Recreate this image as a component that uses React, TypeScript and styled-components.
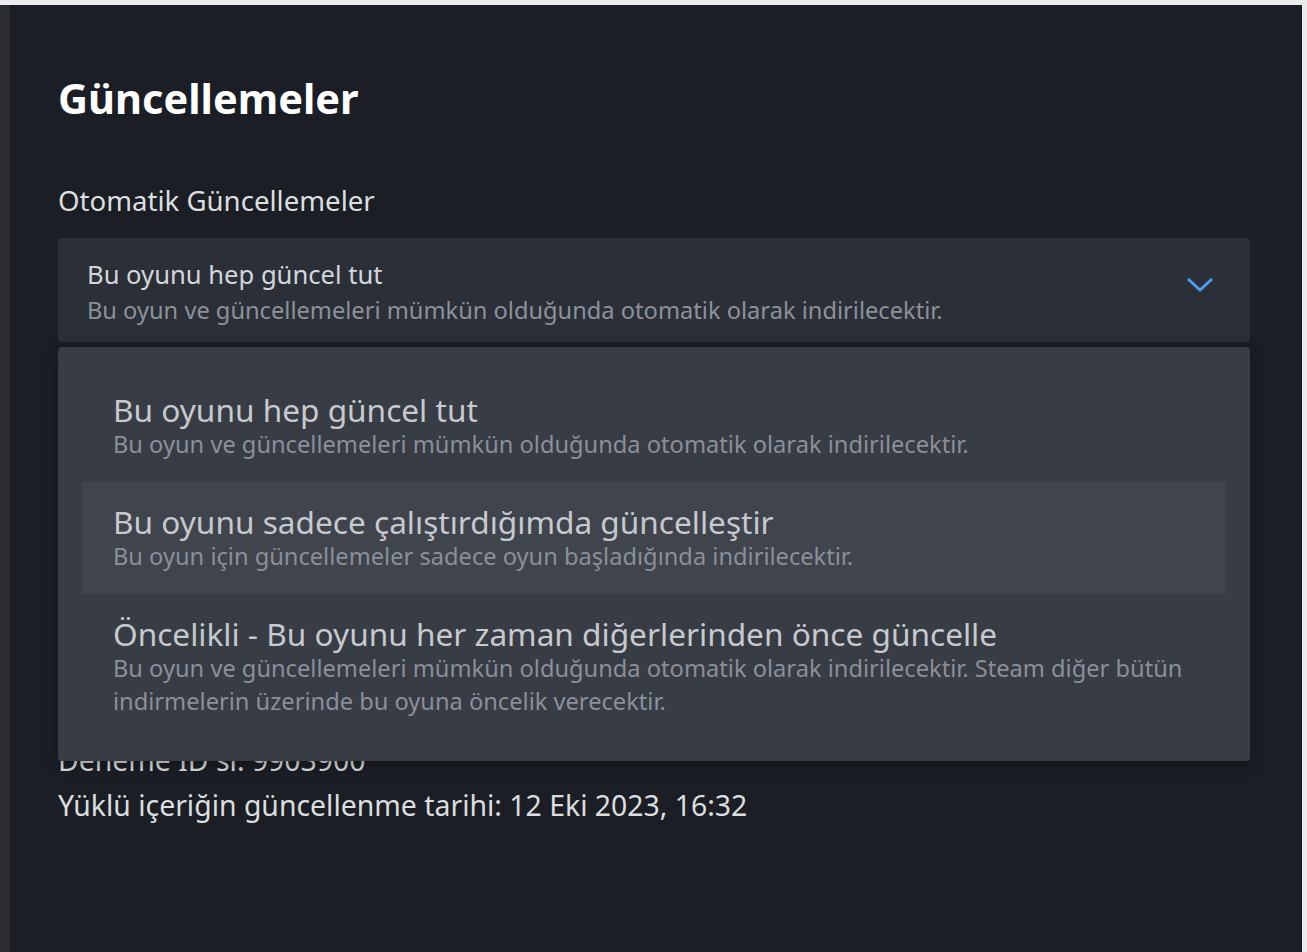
import React from "react";
import styled, { createGlobalStyle } from "styled-components";

const Global = createGlobalStyle`
  html, body { margin: 0; padding: 0; background: #ebebeb; }
  body { font-family: "Noto Sans", "Open Sans", sans-serif; }
  * { box-sizing: border-box; }
`;

const Frame = styled.div`
  display: flex;
  height: 952px;
  padding: 5px 5px 0 0;
  background: #ebebeb;
`;

const SideStrip = styled.div`
  width: 10px;
  flex: none;
  background: #2a2c31;
`;

const Main = styled.main`
  flex: 1;
  background: #1b1e25;
  padding: 67px 52px 0 48px;
  overflow: hidden;
`;

const Heading = styled.h1`
  margin: 0;
  font-family: "Noto Sans", sans-serif;
  font-weight: 700;
  font-size: 41.5px;
  line-height: 52px;
  color: #ffffff;
`;

const SectionLabel = styled.div`
  margin-top: 59px;
  font-size: 27.6px;
  line-height: 34px;
  color: #dcdedf;
`;

const SelectWrap = styled.div`
  position: relative;
  margin-top: 21px;
`;

const SelectBox = styled.div`
  display: flex;
  align-items: flex-start;
  background: #2b2f38;
  border-radius: 4px;
  padding: 19px 36px 15px 29px;
`;

const SelectText = styled.div`
  flex: 1;
  display: flex;
  flex-direction: column;
`;

const SelectTitle = styled.div`
  font-size: 25.6px;
  line-height: 36px;
  color: #d4d7da;
`;

const SelectSub = styled.div`
  font-size: 23.65px;
  line-height: 34px;
  color: #8b929a;
`;

const Chevron = styled.svg`
  width: 28px;
  height: 16px;
  flex: none;
  margin-top: 20px;
`;

const Menu = styled.div`
  position: absolute;
  top: calc(100% + 5px);
  left: 0;
  right: 0;
  z-index: 5;
  background: #383c45;
  border-radius: 4px;
  padding: 23px 24px 22px;
  box-shadow: 0 4px 14px rgba(0, 0, 0, 0.35);
`;

const Option = styled.div<{ $active?: boolean }>`
  padding: 22px 31px 21px;
  background: ${(p) => (p.$active ? "#40444d" : "transparent")};
`;

const OptionTitle = styled.div`
  font-size: 31.6px;
  line-height: 36px;
  color: #c6c9cd;
`;

const OptionSub = styled.div`
  font-size: 23.65px;
  line-height: 33px;
  color: #8a9099;
`;

const InfoBlock = styled.div`
  margin-top: 401px;
  display: flex;
  flex-direction: column;
  gap: 11px;
`;

const InfoLine = styled.div`
  font-size: 28.4px;
  line-height: 34px;
  color: #dcdedf;
`;

const options = [
  {
    title: "Bu oyunu hep güncel tut",
    sub: "Bu oyun ve güncellemeleri mümkün olduğunda otomatik olarak indirilecektir.",
  },
  {
    title: "Bu oyunu sadece çalıştırdığımda güncelleştir",
    sub: "Bu oyun için güncellemeler sadece oyun başladığında indirilecektir.",
    active: true,
  },
  {
    title: "Öncelikli - Bu oyunu her zaman diğerlerinden önce güncelle",
    sub: "Bu oyun ve güncellemeleri mümkün olduğunda otomatik olarak indirilecektir. Steam diğer bütün indirmelerin üzerinde bu oyuna öncelik verecektir.",
  },
];

export default function App() {
  return (
    <>
      <Global />
      <Frame>
        <SideStrip />
        <Main>
          <Heading>Güncellemeler</Heading>
          <SectionLabel>Otomatik Güncellemeler</SectionLabel>
          <SelectWrap>
            <SelectBox>
              <SelectText>
                <SelectTitle>Bu oyunu hep güncel tut</SelectTitle>
                <SelectSub>
                  Bu oyun ve güncellemeleri mümkün olduğunda otomatik olarak indirilecektir.
                </SelectSub>
              </SelectText>
              <Chevron viewBox="0 0 28 16" fill="none">
                <path
                  d="M2 2 L14 13 L26 2"
                  stroke="#4a9ff5"
                  strokeWidth="3"
                  strokeLinecap="butt"
                  strokeLinejoin="miter"
                />
              </Chevron>
            </SelectBox>
            <Menu>
              {options.map((o) => (
                <Option key={o.title} $active={o.active}>
                  <OptionTitle>{o.title}</OptionTitle>
                  <OptionSub>{o.sub}</OptionSub>
                </Option>
              ))}
            </Menu>
          </SelectWrap>
          <InfoBlock>
            <InfoLine>Deneme ID si: 9903900</InfoLine>
            <InfoLine>Yüklü içeriğin güncellenme tarihi: 12 Eki 2023, 16:32</InfoLine>
          </InfoBlock>
        </Main>
      </Frame>
    </>
  );
}
